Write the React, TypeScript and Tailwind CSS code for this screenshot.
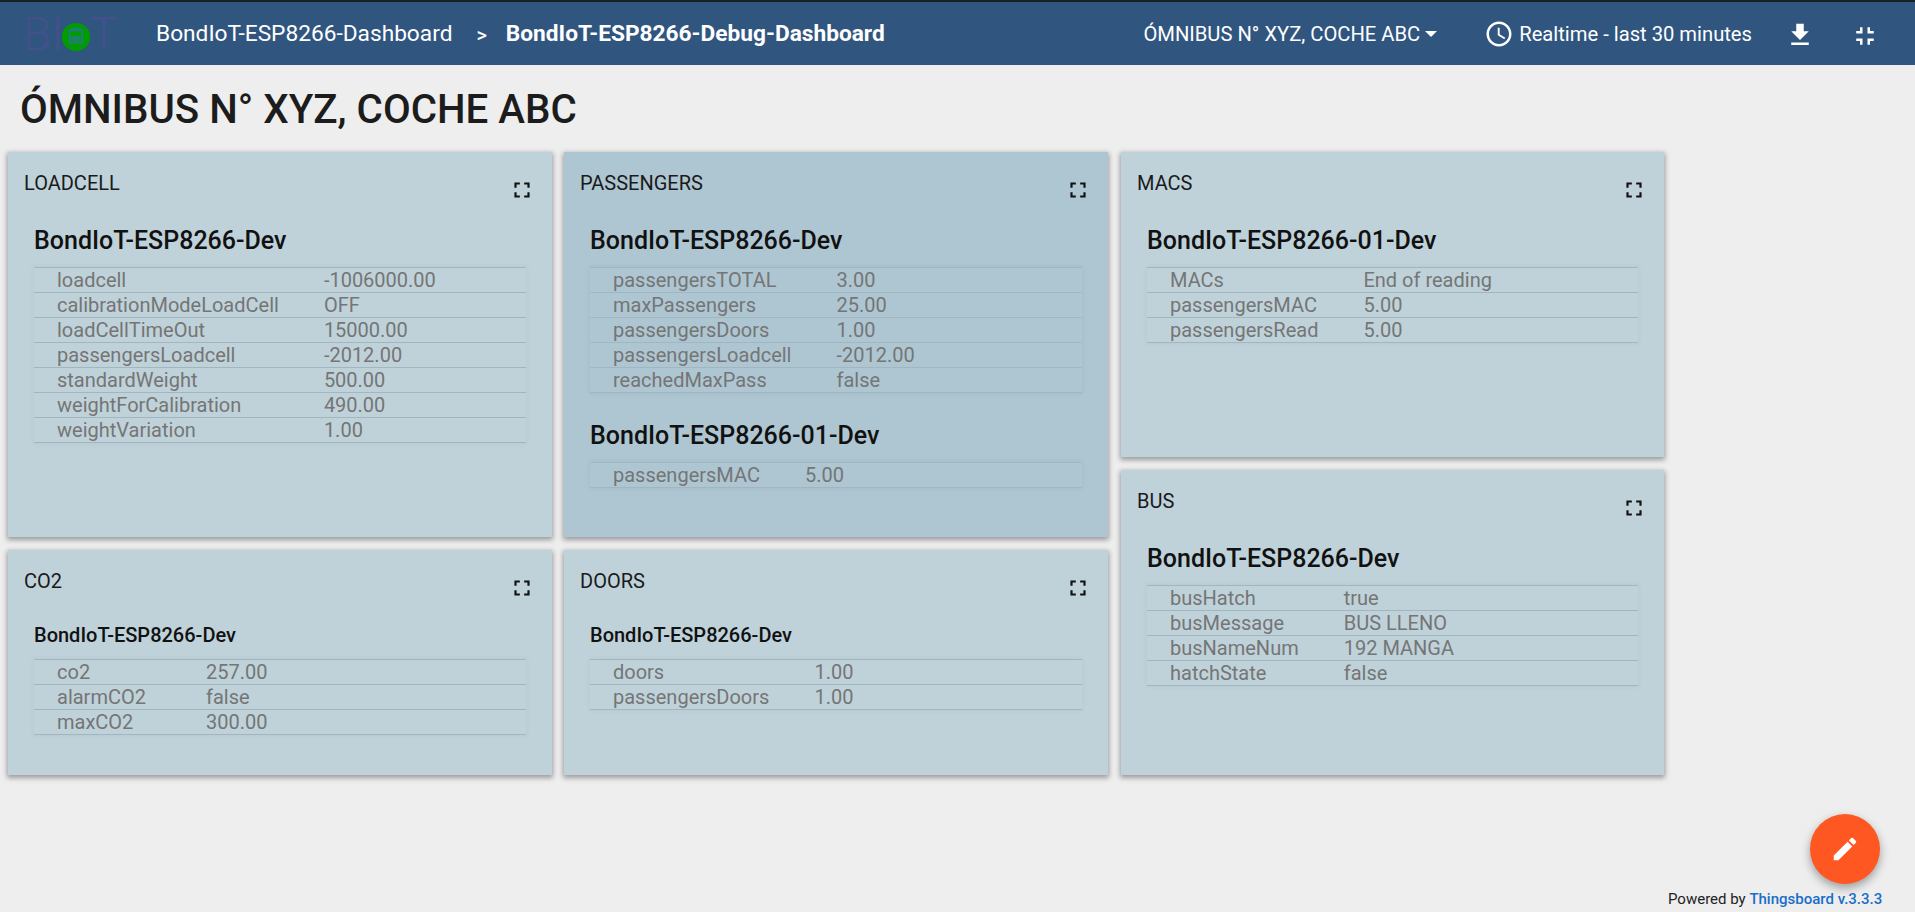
import React from "react";

const P = ({ d, className }: { d: string; className: string }) => (
  <svg viewBox="0 0 24 24" className={className} fill="currentColor">
    <path d={d} />
  </svg>
);
const FULL = "M7 14H5v5h5v-2H7v-3zm-2-4h2V7h3V5H5v5zm12 7h-3v2h5v-5h-2v3zM14 5v2h3v3h2V5h-5z";
const EXIT = "M5 16h3v3h2v-5H5v2zm3-8H5v2h5V5H8v3zm6 11h2v-3h3v-2h-5v5zm2-11V5h-2v5h5V8h-3z";
const DOWN = "M19 9h-4V3H9v6H5l7 7 7-7zM5 18v2h14v-2H5z";
const EDIT = "M3 17.25V21h3.75L17.81 9.94l-3.75-3.75L3 17.25zM20.71 7.04a.996.996 0 0 0 0-1.41l-2.34-2.34a.996.996 0 0 0-1.41 0l-1.83 1.83 3.75 3.75 1.83-1.83z";
const CLOCK = "M11.99 2C6.47 2 2 6.48 2 12s4.47 10 9.99 10C17.52 22 22 17.52 22 12S17.52 2 11.99 2zM12 20c-4.42 0-8-3.58-8-8s3.58-8 8-8 8 3.58 8 8-3.58 8-8 8zm.5-13H11v6l5.25 3.15.75-1.23-4.5-2.67z";
const BUS = "M4 16c0 .88.39 1.67 1 2.22V20c0 .55.45 1 1 1h1c.55 0 1-.45 1-1v-1h8v1c0 .55.45 1 1 1h1c.55 0 1-.45 1-1v-1.78c.61-.55 1-1.34 1-2.22V6c0-3.5-3.58-4-8-4s-8 .5-8 4v10zm3.5 1c-.83 0-1.5-.67-1.5-1.5S6.67 14 7.5 14s1.5.67 1.5 1.5S8.33 17 7.5 17zm9 0c-.83 0-1.5-.67-1.5-1.5s.67-1.5 1.5-1.5 1.5.67 1.5 1.5-.67 1.5-1.5 1.5zm1.5-6H6V6h12v5z";

type Section = { name: string; rows: [string, string][] };

function Card({ title, sections, small, dark, height, wideKey }: { title: string; sections: Section[]; small?: boolean; dark?: boolean; height: string; wideKey?: boolean }) {
  return (
    <div className={`${height} ${dark ? "bg-[#aec6d2]" : "bg-[#bfd2da]"} shadow-[0_2px_5px_1px_rgba(0,0,0,0.35)] px-[26px] pt-[20px]`}>
      <div className="flex items-start justify-between -ml-[10px] -mr-[9px] h-[31px]">
        <div className="text-[20px] leading-[23px] text-[#1a1a1a]">{title}</div>
        <P d={FULL} className="w-[26px] h-[26px] text-[#111] mt-[5px]" />
      </div>
      {sections.map((s, i) => (
        <div key={s.name} className={i > 0 ? "mt-[25px]" : small ? "mt-[21px]" : "mt-[20px]"}>
          <div className={`${small ? "text-[20px] leading-[26px]" : "text-[25px] leading-[36px]"} font-medium text-[#111]`}>{s.name}</div>
          <table className={`${small ? "mt-[11px]" : "mt-[8px]"} w-full border-collapse shadow-[0_0_6px_rgba(0,0,0,0.06)]`}>
            <tbody>
              {s.rows.map(([k, v]) => (
                <tr key={k} className="h-[25px] border-y border-[#a3b5bf]">
                  <td className={`pl-[23px] ${wideKey ? "pr-[60px]" : "pr-[45px]"} text-[20px] leading-[24px] text-[#757575] whitespace-nowrap`}>{k}</td>
                  <td className="pr-[23px] text-[20px] leading-[24px] text-[#757575] w-full whitespace-nowrap">{v}</td>
                </tr>
              ))}
            </tbody>
          </table>
        </div>
      ))}
    </div>
  );
}

export default function App() {
  return (
    <div className="w-[1915px] h-[912px] overflow-hidden bg-[#eeeeee] relative font-['Roboto',sans-serif]">
      <header className="h-[65px] bg-[#305680] border-t-2 border-[#1c1f24] flex items-center text-white">
        <div className="w-[156px] pl-[23px] flex items-center">
          <span className="text-[46px] leading-none font-light text-[#43508c] flex items-center">
            BI
            <span className="w-[28px] h-[28px] rounded-full bg-[#009c00] flex items-center justify-center -mx-[1px] mt-[6px]">
              <P d={BUS} className="w-[22px] h-[22px] text-[#1e8070]" />
            </span>
            T
          </span>
        </div>
        <span className="text-[22.7px] mt-[2px]">BondIoT-ESP8266-Dashboard</span>
        <span className="text-[20px] ml-[24px] mt-[2px] font-medium">&gt;</span>
        <span className="text-[22.7px] font-bold ml-[19px] mt-[2px]">BondIoT-ESP8266-Debug-Dashboard</span>
        <div className="ml-auto flex items-center">
          <span className="text-[20.2px] mt-[2px]">ÓMNIBUS N° XYZ, COCHE ABC</span>
          <span className="ml-[5px] w-0 h-0 border-x-[6px] border-x-transparent border-t-[6px] border-t-white" />
          <P d={CLOCK} className="w-[30px] h-[30px] ml-[47px] mt-[1px]" />
          <span className="text-[20.2px] ml-[5px] mt-[2px]">Realtime - last 30 minutes</span>
          <P d={DOWN} className="w-[30px] h-[30px] ml-[33px] mt-[3px]" />
          <P d={EXIT} className="w-[30px] h-[30px] ml-[35px] mr-[35px] mt-[4px]" />
        </div>
      </header>
      <h1 className="text-[40.3px] leading-[48px] font-medium text-[#1c1c1c] ml-[20px] mt-[21px]">ÓMNIBUS N° XYZ, COCHE ABC</h1>
      <div className="mt-[18px] ml-[8px] flex">
        <div className="w-[544px] flex flex-col gap-[13px]">
          <Card title="LOADCELL" height="h-[385px]" sections={[{ name: "BondIoT-ESP8266-Dev", rows: [["loadcell", "-1006000.00"], ["calibrationModeLoadCell", "OFF"], ["loadCellTimeOut", "15000.00"], ["passengersLoadcell", "-2012.00"], ["standardWeight", "500.00"], ["weightForCalibration", "490.00"], ["weightVariation", "1.00"]] }]} />
          <Card title="CO2" small wideKey height="h-[225px]" sections={[{ name: "BondIoT-ESP8266-Dev", rows: [["co2", "257.00"], ["alarmCO2", "false"], ["maxCO2", "300.00"]] }]} />
        </div>
        <div className="w-[544px] ml-[12px] flex flex-col gap-[13px]">
          <Card title="PASSENGERS" dark height="h-[385px]" sections={[{ name: "BondIoT-ESP8266-Dev", rows: [["passengersTOTAL", "3.00"], ["maxPassengers", "25.00"], ["passengersDoors", "1.00"], ["passengersLoadcell", "-2012.00"], ["reachedMaxPass", "false"]] }, { name: "BondIoT-ESP8266-01-Dev", rows: [["passengersMAC", "5.00"]] }]} />
          <Card title="DOORS" small height="h-[225px]" sections={[{ name: "BondIoT-ESP8266-Dev", rows: [["doors", "1.00"], ["passengersDoors", "1.00"]] }]} />
        </div>
        <div className="w-[543px] ml-[13px] flex flex-col gap-[13px]">
          <Card title="MACS" height="h-[305px]" sections={[{ name: "BondIoT-ESP8266-01-Dev", rows: [["MACs", "End of reading"], ["passengersMAC", "5.00"], ["passengersRead", "5.00"]] }]} />
          <Card title="BUS" height="h-[305px]" sections={[{ name: "BondIoT-ESP8266-Dev", rows: [["busHatch", "true"], ["busMessage", "BUS LLENO"], ["busNameNum", "192 MANGA"], ["hatchState", "false"]] }]} />
        </div>
      </div>
      <button className="absolute left-[1810px] top-[814px] w-[70px] h-[70px] rounded-full bg-[#ff5722] text-white flex items-center justify-center shadow-[0_4px_10px_rgba(0,0,0,0.35)]">
        <P d={EDIT} className="w-[30px] h-[30px]" />
      </button>
      <div className="absolute left-[1668px] top-[890px] text-[15px] leading-[18px] text-[#222]">
        Powered by <span className="font-medium text-[#1a6ec8]">Thingsboard v.3.3.3</span>
      </div>
    </div>
  );
}
